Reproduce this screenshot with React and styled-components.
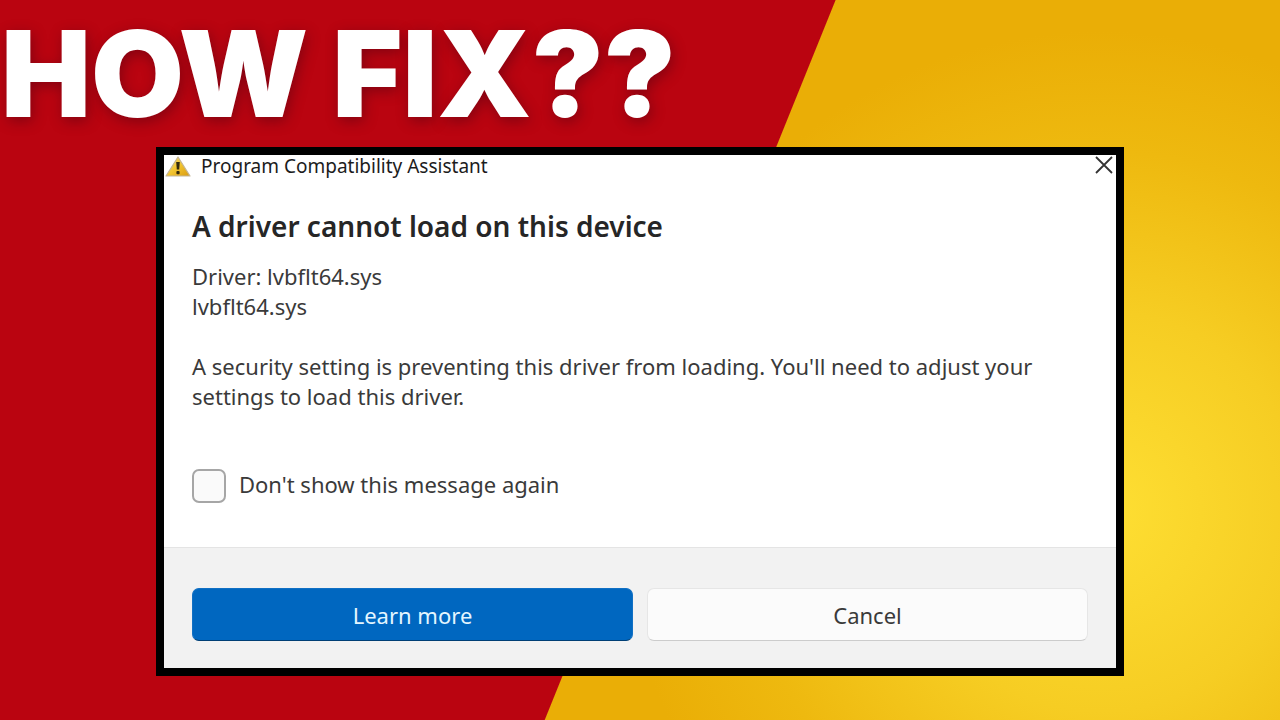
import { useState } from "react";
import styled, { createGlobalStyle } from "styled-components";

const GlobalStyle = createGlobalStyle`
  * {
    box-sizing: border-box;
  }
  body {
    margin: 0;
    font-family: "Noto Sans", "Open Sans", sans-serif;
  }
`;

const Page = styled.div`
  min-height: 100vh;
  background: linear-gradient(
      112deg,
      #ba0410 calc(50% + 46px),
      transparent calc(50% + 47px)
    ),
    radial-gradient(
      circle at 86% 71%,
      #fedf33 0,
      #f6cd23 200px,
      #eeb90f 360px,
      #eaae06 480px
    );
`;
const Headline = styled.h1`
  margin: 0;
  height: 147px;
  padding-left: 1px;
  line-height: 147px;
  color: #fff;
  font-family: Inter, sans-serif;
  font-size: 120px;
  font-weight: 900;
  white-space: nowrap;
  text-shadow: 2px 4px 14px rgba(50, 0, 20, 0.4);
`;
const Dialog = styled.section`
  margin: 0 156px;
  border: 8px solid #000;
  background: #fff;
  color: #3a3a3a;
`;
const TitleBar = styled.header`
  display: flex;
  align-items: center;
  height: 24px;
  padding-left: 1px;
  color: #1c1c1c;
  font-size: 19px;
  line-height: 24px;
`;
const TitleText = styled.span`
  flex: 1;
  padding: 0 10px 2px;
`;
const CloseButton = styled.button`
  display: flex;
  padding: 0 3px 4px;
  border: 0;
  background: none;
  color: #333;
`;
const Content = styled.div`
  padding: 27px 28px 44px;
  font-size: 22px;
  line-height: 30px;
`;
const Title = styled.h2`
  margin: 0 0 15px;
  color: #262626;
  font-size: 28px;
  font-weight: 600;
  line-height: 40px;
`;
const Text = styled.p`
  margin: 0 0 30px;
`;
const CheckLabel = styled.label`
  display: flex;
  align-items: flex-start;
  gap: 13px;
  margin-top: 58px;
`;
const CheckBox = styled.input`
  appearance: none;
  width: 34px;
  height: 34px;
  margin: 0;
  border: 2px solid #a6a6a6;
  border-radius: 7px;
  background: ${props => (props.checked ? "#0067c0" : "#fafafa")};
`;
const Footer = styled.footer`
  display: flex;
  gap: 14px;
  padding: 40px 28px 27px;
  border-top: 1px solid #e4e4e4;
  background: #f2f2f2;
`;
const Button = styled.button`
  flex: 1;
  height: 53px;
  border: 1px solid ${props => (props.$primary ? "#1170c4" : "#e6e6e6")};
  border-bottom-color: ${props => (props.$primary ? "#003f75" : "#cccccc")};
  border-radius: 7px;
  background: ${props => (props.$primary ? "#0067c0" : "#fbfbfb")};
  color: ${props => (props.$primary ? "#e4f6ff" : "#3a3a3a")};
  font-family: inherit;
  font-size: 22px;
`;

const WarningIcon = () => (
  <svg width="26" height="22" viewBox="0 0 26 22" aria-hidden="true">
    <defs>
      <linearGradient id="warn" x1="0" y1="0" x2="1" y2="1">
        <stop offset="0" stopColor="#f5d978" />
        <stop offset="0.5" stopColor="#f2c530" />
        <stop offset="1" stopColor="#d99a10" />
      </linearGradient>
    </defs>
    <path
      d="M13 1 L25 20 H1 Z"
      fill="url(#warn)"
      stroke="#c4b596"
      strokeWidth="1.2"
      strokeLinejoin="round"
    />
    <path d="M11.2 6 H14.8 L14.2 13.5 H11.8 Z" fill="#33290c" />
    <rect x="11.4" y="15" width="3.2" height="3.2" rx="1" fill="#33290c" />
  </svg>
);

const CloseIcon = () => (
  <svg width="18" height="18" viewBox="0 0 18 18" aria-hidden="true">
    <path d="M1 1 L17 17 M17 1 L1 17" stroke="currentColor" strokeWidth="1.8" />
  </svg>
);

const App = () => {
  const [hidden, setHidden] = useState(false);

  return (
    <Page>
      <GlobalStyle />
      <Headline>HOW FIX??</Headline>
      <Dialog role="dialog" aria-labelledby="dialog-title">
        <TitleBar>
          <WarningIcon />
          <TitleText>Program Compatibility Assistant</TitleText>
          <CloseButton aria-label="Close">
            <CloseIcon />
          </CloseButton>
        </TitleBar>
        <Content>
          <Title id="dialog-title">A driver cannot load on this device</Title>
          <Text>
            Driver: lvbflt64.sys
            <br />
            lvbflt64.sys
          </Text>
          <Text>
            A security setting is preventing this driver from loading. You'll
            need to adjust your settings to load this driver.
          </Text>
          <CheckLabel>
            <CheckBox
              type="checkbox"
              checked={hidden}
              onChange={e => setHidden(e.target.checked)}
            />
            Don't show this message again
          </CheckLabel>
        </Content>
        <Footer>
          <Button $primary>Learn more</Button>
          <Button>Cancel</Button>
        </Footer>
      </Dialog>
    </Page>
  );
};

export default App;
